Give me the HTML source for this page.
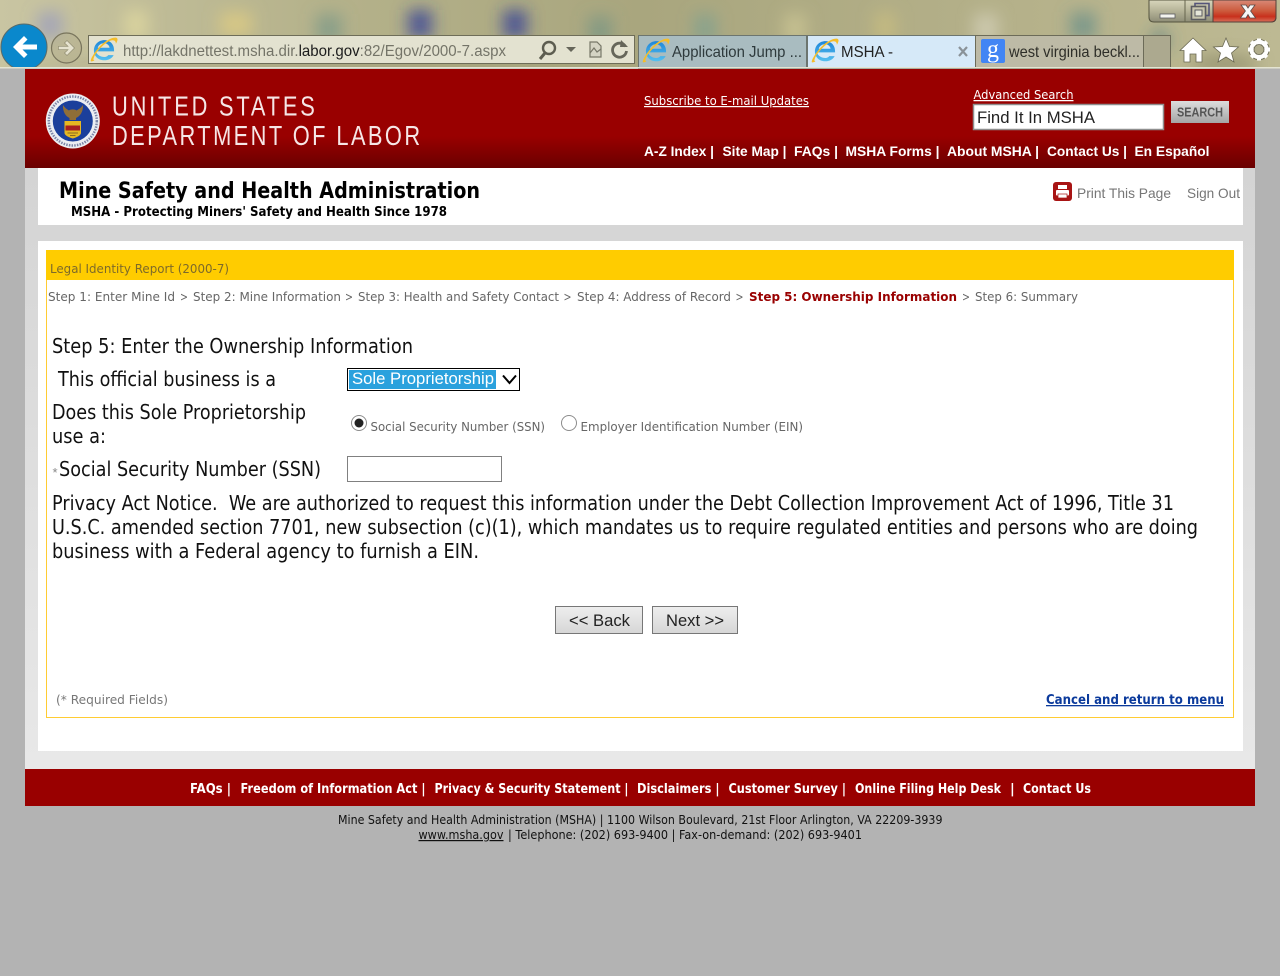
<!DOCTYPE html>
<html lang="en"><head><meta charset="utf-8"><title>MSHA - Legal Identity Report</title>
<style>
html,body{margin:0;padding:0;background:#b3b3b3;width:1280px;height:976px;overflow:hidden}
svg{display:block}
text{white-space:pre}
.t{font-family:"DejaVu Sans","Liberation Sans",sans-serif}
.a{font-family:"Liberation Sans",Arial,sans-serif}
.b{font-weight:bold}
.u{text-decoration:underline}
</style></head><body>
<svg xmlns="http://www.w3.org/2000/svg" width="1280" height="976" viewBox="0 0 1280 976">
<defs>
<linearGradient id="wall" x1="0" y1="0" x2="1" y2="0"><stop offset="0" stop-color="#c9c5a2"/><stop offset=".25" stop-color="#b5b28b"/><stop offset=".5" stop-color="#a9a67e"/><stop offset=".8" stop-color="#b5b18a"/><stop offset="1" stop-color="#bdb993"/></linearGradient>
<linearGradient id="red" x1="0" y1="0" x2="0" y2="1"><stop offset="0" stop-color="#990000"/><stop offset=".68" stop-color="#990000"/><stop offset="1" stop-color="#6a0000"/></linearGradient>
<linearGradient id="pg" x1="0" y1="0" x2="0" y2="1"><stop offset="0" stop-color="#d4d4d4"/><stop offset="1" stop-color="#e8e8e8"/></linearGradient>
<linearGradient id="srch" x1="0" y1="0" x2="0" y2="1"><stop offset="0" stop-color="#dcdcdc"/><stop offset="1" stop-color="#a5a5a5"/></linearGradient>
<linearGradient id="btn" x1="0" y1="0" x2="0" y2="1"><stop offset="0" stop-color="#eeeeee"/><stop offset="1" stop-color="#d6d6d6"/></linearGradient>
<linearGradient id="close" x1="0" y1="0" x2="0" y2="1"><stop offset="0" stop-color="#d98a78"/><stop offset=".5" stop-color="#cc5a3c"/><stop offset=".75" stop-color="#c8301c"/><stop offset="1" stop-color="#d8705a"/></linearGradient>
<linearGradient id="win" x1="0" y1="0" x2="0" y2="1"><stop offset="0" stop-color="#d8d6bc"/><stop offset=".5" stop-color="#b5b397"/><stop offset="1" stop-color="#8e8d76"/></linearGradient>
<linearGradient id="ieb" x1="0" y1="0" x2="0" y2="1"><stop offset="0" stop-color="#1f86d8"/><stop offset="1" stop-color="#55c0f0"/></linearGradient>
<filter id="bl" x="-80%" y="-80%" width="260%" height="260%"><feGaussianBlur stdDeviation="8"/></filter>
<clipPath id="top"><rect x="0" y="0" width="1280" height="68"/></clipPath>
<g id="ie">
<g transform="scale(1.12)">
<path d="M-7 1.200H9C9.400 -5.500 4.900 -8.800 0.400 -8.800C-5 -8.800 -9 -4.700 -9 0.400C-9 5.500 -5 9.200 0.400 9.200C4.200 9.200 7.200 7.500 8.600 4.600H3.800C2.900 5.800 1.900 6.200 0.400 6.200C-3 6.200 -6.800 4.200 -7 1.200ZM-5.600 -2C-5 -4.500 -2.500 -6 0 -6C2.500 -6 4.600 -4.500 5 -2Z" fill="url(#ieb)" fill-rule="evenodd"/>
<path d="M-10.500 10C-14 11.500 -10 3.500 -3.500 -3.500C2 -9 8.500 -11.800 11.300 -10.800C13 -10 11.500 -7 10.600 -5.400C10.800 -8.200 8.800 -9.400 5.800 -8.400C1 -6.800 -7.500 1.500 -9.300 7.500C-9.600 8.700 -9.400 9.200 -8.500 9.500C-9.200 9.800 -9.900 9.900 -10.500 10Z" fill="#f4bd2a"/>
</g>
</g>
</defs>

<!-- page background -->
<rect width="1280" height="976" fill="#b3b3b3"/>

<!-- browser chrome wallpaper -->
<g clip-path="url(#top)">
<rect width="1280" height="68" fill="url(#wall)"/>
<g filter="url(#bl)">
<rect x="38" y="12" width="24" height="26" fill="#8e92c8" opacity=".6"/>
<rect x="124" y="10" width="24" height="30" fill="#e2dca0" opacity=".7"/>
<rect x="220" y="12" width="32" height="24" fill="#e3cf80" opacity=".7"/>
<rect x="316" y="14" width="26" height="30" fill="#5f8e88" opacity=".5"/>
<rect x="408" y="10" width="24" height="28" fill="#2c3a98" opacity=".75"/>
<rect x="503" y="10" width="24" height="28" fill="#2c3a98" opacity=".75"/>
<rect x="588" y="16" width="24" height="30" fill="#5f8e88" opacity=".5"/>
<rect x="694" y="14" width="22" height="30" fill="#6d9e98" opacity=".55"/>
<rect x="784" y="14" width="22" height="30" fill="#d8d29a" opacity=".55"/>
<rect x="874" y="12" width="22" height="30" fill="#d6c67e" opacity=".5"/>
<rect x="974" y="14" width="24" height="30" fill="#d8d6c0" opacity=".65"/>
<rect x="1070" y="12" width="26" height="28" fill="#4f8488" opacity=".55"/>
<ellipse cx="1160" cy="40" rx="10" ry="12" fill="#3c6a7c" opacity=".45"/>
<ellipse cx="1225" cy="64" rx="34" ry="8" fill="#7f7d5c" opacity=".6"/>
<ellipse cx="300" cy="66" rx="300" ry="4" fill="#6e6c4e" opacity=".35"/>
</g>
</g>

<!-- window buttons -->
<path d="M1149 0H1276V17Q1276 22 1271 22H1154Q1149 22 1149 17Z" fill="url(#win)" stroke="#55543f"/>
<path d="M1213 0H1276V17Q1276 22 1271 22H1213Z" fill="url(#close)" stroke="#55403a"/>
<line x1="1185" y1="0" x2="1185" y2="22" stroke="#66654e"/>
<rect x="1160" y="14" width="15" height="4" fill="#f4f4ee" stroke="#5c5c60" stroke-width=".8"/>
<rect x="1195" y="3.500" width="14" height="12" fill="none" stroke="#55557a" stroke-width="1.600"/>
<rect x="1191.500" y="6.500" width="14" height="13" fill="#c8c6ae" stroke="#5c5c60" stroke-width="1.600"/>
<rect x="1195" y="10" width="7" height="6" fill="#e6e6d8" stroke="#5c5c60"/>
<path d="M1241 5H1246L1248 8L1250 5H1255L1250.600 11L1255.600 18H1250L1248 14.600L1246 18H1240.400L1245.400 11Z" fill="#f6f6f6" stroke="#5b4a48" stroke-width=".8"/>

<!-- back/forward -->
<g clip-path="url(#top)">
<circle cx="24" cy="47" r="23" fill="#0a88cc" stroke="#5a6a68" stroke-width="1"/>
<path d="M13 47L24 36L27.500 39.500L22.500 44.500H37V49.500H22.500L27.500 54.500L24 58Z" fill="#fff"/>
</g>
<circle cx="66.500" cy="48" r="15" fill="#b5b08f" fill-opacity=".6" stroke="#78745c" stroke-width="1.200"/>
<path d="M74.500 48L67 40.500L64.500 43L68 46.300H58.500V49.700H68L64.500 53L67 55.500Z" fill="#e6e3cf" stroke="#8b876c" stroke-width=".6"/>

<!-- address bar -->
<rect x="88.500" y="35.500" width="546" height="28" fill="#e3e2d0" stroke="#6e6d58"/>
<use href="#ie" x="104" y="50"/>
<text class="a" x="123" y="56" font-size="16" fill="#747468" textLength="383" lengthAdjust="spacingAndGlyphs">http://lakdnettest.msha.dir.<tspan fill="#1c1c1c">labor.gov</tspan>:82/Egov/2000-7.aspx</text>
<circle cx="549" cy="48" r="6" fill="none" stroke="#5d5d50" stroke-width="2.400"/>
<line x1="545" y1="53" x2="540" y2="59" stroke="#5d5d50" stroke-width="3"/>
<path d="M566 47H576L571 52Z" fill="#66665a"/>
<path d="M590 42H597L601 46V57H590Z" fill="#d5d4c4" stroke="#777768" stroke-width="1.200"/>
<path d="M590 53L594 48L597 52L601 49" fill="none" stroke="#777768" stroke-width="1.200"/>
<path d="M625.500 46.500A7 7 0 1 0 626.500 51" fill="none" stroke="#66665a" stroke-width="2.800"/>
<path d="M621 40L628 47L620 47Z" fill="#66665a"/>

<!-- tabs -->
<rect x="638.500" y="35.500" width="168" height="33" fill="#a9bcc0" stroke="#6c756f"/>
<use href="#ie" x="656" y="51"/>
<text class="a" x="672" y="57" font-size="16" fill="#2e3a3c" textLength="130" lengthAdjust="spacingAndGlyphs">Application Jump ...</text>
<rect x="807.500" y="35.500" width="168" height="33" fill="#d6e9f8" stroke="#6c756f"/>
<use href="#ie" x="825" y="51"/>
<text class="a" x="841" y="57" font-size="16" fill="#222" textLength="52" lengthAdjust="spacingAndGlyphs">MSHA -</text>
<path d="M959 47L967 56M967 47L959 56" stroke="#8a9298" stroke-width="2.200"/>
<rect x="975.500" y="35.500" width="168" height="33" fill="#bdbaa6" stroke="#6c6b58"/>
<rect x="1143.500" y="35.500" width="27" height="33" fill="#aca98f" stroke="#6c6b58"/>
<rect x="981" y="39" width="24" height="24" rx="2" fill="#4285f4"/>
<text x="987" y="57" font-size="25" fill="#fff" style="font-family:'Liberation Serif',serif" textLength="12" lengthAdjust="spacingAndGlyphs">g</text>
<text class="a" x="1009" y="57" font-size="16" fill="#2e2e28" textLength="131" lengthAdjust="spacingAndGlyphs">west virginia beckl...</text>

<!-- home / star / gear -->
<path d="M1193 38L1206 50.500H1202V62H1196V54H1190V62H1184V50.500H1180Z" fill="#fff" stroke="#6a6852" stroke-width=".8"/>
<path d="M1226 38L1229.500 46.500L1238.500 47L1231.500 53L1234 62L1226 57L1218 62L1220.500 53L1213.500 47L1222.500 46.500Z" fill="#fff" stroke="#6a6852" stroke-width=".8"/>
<circle cx="1259" cy="49.500" r="7.800" fill="none" stroke="#6a6852" stroke-width="5.500"/>
<circle cx="1259" cy="49.500" r="7.800" fill="none" stroke="#fff" stroke-width="3.800"/>
<g stroke="#fff" stroke-width="4"><line x1="1259" y1="38.500" x2="1259" y2="60.500"/><line x1="1248" y1="49.500" x2="1270" y2="49.500"/><line x1="1251.200" y1="41.700" x2="1266.800" y2="57.300"/><line x1="1266.800" y1="41.700" x2="1251.200" y2="57.300"/></g>
<circle cx="1259" cy="49.500" r="5" fill="#b0ad8c" stroke="#6a6852" stroke-width=".8"/>
<rect x="0" y="67" width="1280" height="1.500" fill="#e4e4d2"/>

<!-- page wrapper -->
<rect x="25" y="168" width="1230" height="601" fill="url(#pg)"/>

<!-- red header -->
<rect x="25" y="69" width="1230" height="99" fill="url(#red)"/>
<!-- seal -->
<ellipse cx="72.800" cy="121" rx="27" ry="27.500" fill="#eceef2"/>
<ellipse cx="72.800" cy="121" rx="24" ry="24.500" fill="none" stroke="#7c86a8" stroke-width="2.500" stroke-dasharray="1.500 1.200"/>
<ellipse cx="72.800" cy="121" rx="20" ry="20.500" fill="#1b3f9b"/>
<path d="M63 105C65 108 66.500 109 69 110.500C70.500 109 75 109 76.500 110.500C79 109 81 108 83 105C83.500 112 79.500 116.500 76 118V120H69.500V118C66 116.500 62.500 112 63 105Z" fill="#8f6e38"/>
<path d="M64.500 121H81V133C81 135.500 76 137.500 72.800 138.500C69.500 137.500 64.500 135.500 64.500 133Z" fill="#e6b822"/>
<rect x="65.500" y="125.500" width="14.500" height="5" fill="#a82020"/>
<path d="M67.500 133H78M70 135.500H75.500" stroke="#8a6a20" stroke-width="1"/>
<text class="a" transform="translate(112 115.500) scale(.78 1)" x="0" y="0" font-size="28" fill="#f6e6e6" textLength="260" lengthAdjust="spacing">UNITED STATES</text>
<text class="a" transform="translate(112 145) scale(.78 1)" x="0" y="0" font-size="28" fill="#f6e6e6" textLength="395" lengthAdjust="spacing">DEPARTMENT OF LABOR</text>

<text class="t u" x="644" y="105" font-size="12" fill="#fff" textLength="165" lengthAdjust="spacingAndGlyphs">Subscribe to E-mail Updates</text>
<text class="t u" x="973.500" y="99" font-size="12.500" fill="#fff" textLength="100" lengthAdjust="spacingAndGlyphs">Advanced Search</text>
<rect x="973.500" y="104.500" width="190" height="25" fill="#fff" stroke="#8f8f8f" stroke-width="1.500"/>
<text class="a" x="977" y="123" font-size="17" fill="#222" textLength="118" lengthAdjust="spacingAndGlyphs">Find It In MSHA</text>
<rect x="1171" y="101" width="58" height="22" fill="url(#srch)"/>
<text class="a b" x="1177" y="116.500" font-size="12.500" fill="#555" textLength="46" lengthAdjust="spacingAndGlyphs">SEARCH</text>

<g class="a b" font-size="14" fill="#fff">
<text x="644" y="156" textLength="70" lengthAdjust="spacingAndGlyphs">A-Z Index |</text>
<text x="722.500" y="156" textLength="64" lengthAdjust="spacingAndGlyphs">Site Map |</text>
<text x="794" y="156" textLength="44" lengthAdjust="spacingAndGlyphs">FAQs |</text>
<text x="845.500" y="156" textLength="94" lengthAdjust="spacingAndGlyphs">MSHA Forms |</text>
<text x="947" y="156" textLength="92" lengthAdjust="spacingAndGlyphs">About MSHA |</text>
<text x="1047" y="156" textLength="80" lengthAdjust="spacingAndGlyphs">Contact Us |</text>
<text x="1134.500" y="156" textLength="75" lengthAdjust="spacingAndGlyphs">En Español</text>
</g>

<!-- title panel -->
<rect x="38" y="168" width="1205" height="57" fill="#fff"/>
<text class="t b" x="59" y="198" font-size="22" fill="#000" textLength="421" lengthAdjust="spacingAndGlyphs">Mine Safety and Health Administration</text>
<text class="t b" x="71" y="216" font-size="13" fill="#000" textLength="376" lengthAdjust="spacingAndGlyphs">MSHA - Protecting Miners' Safety and Health Since 1978</text>
<rect x="1053" y="182" width="19" height="19" rx="3" fill="#a81414"/>
<path d="M1058 185H1067V189H1058Z" fill="#fff"/>
<rect x="1056" y="190" width="13" height="5.500" rx="1" fill="#fff"/>
<rect x="1058" y="194" width="9" height="4" fill="#fff" stroke="#a81414" stroke-width=".7"/>
<text class="a" x="1077" y="198" font-size="14" fill="#767676" textLength="94" lengthAdjust="spacingAndGlyphs">Print This Page</text>
<text class="a" x="1187" y="198" font-size="14" fill="#767676" textLength="53" lengthAdjust="spacingAndGlyphs">Sign Out</text>

<!-- content panel -->
<rect x="38" y="241" width="1205" height="510" fill="#fff"/>
<rect x="46.500" y="250.500" width="1187" height="467" fill="#fff" stroke="#ffcc33"/>
<rect x="46" y="250" width="1188" height="30" fill="#ffcc00"/>
<text class="t" x="50" y="273" font-size="12" fill="#7d6a2a" textLength="179" lengthAdjust="spacingAndGlyphs">Legal Identity Report (2000-7)</text>

<g class="t" font-size="12" fill="#666">
<text x="48" y="301" textLength="127" lengthAdjust="spacingAndGlyphs">Step 1: Enter Mine Id</text>
<text x="180" y="301" textLength="8" lengthAdjust="spacingAndGlyphs">&gt;</text>
<text x="193" y="301" textLength="148" lengthAdjust="spacingAndGlyphs">Step 2: Mine Information</text>
<text x="345" y="301" textLength="8" lengthAdjust="spacingAndGlyphs">&gt;</text>
<text x="358" y="301" textLength="201" lengthAdjust="spacingAndGlyphs">Step 3: Health and Safety Contact</text>
<text x="563.500" y="301" textLength="8" lengthAdjust="spacingAndGlyphs">&gt;</text>
<text x="577" y="301" textLength="154" lengthAdjust="spacingAndGlyphs">Step 4: Address of Record</text>
<text x="735.500" y="301" textLength="8" lengthAdjust="spacingAndGlyphs">&gt;</text>
<text class="b" x="749" y="301" fill="#990000" textLength="208" lengthAdjust="spacingAndGlyphs">Step 5: Ownership Information</text>
<text x="962" y="301" textLength="8" lengthAdjust="spacingAndGlyphs">&gt;</text>
<text x="975" y="301" textLength="103" lengthAdjust="spacingAndGlyphs">Step 6: Summary</text>
</g>

<g class="t" font-size="20" fill="#111">
<text x="52" y="353" textLength="361" lengthAdjust="spacingAndGlyphs">Step 5: Enter the Ownership Information</text>
<text x="58" y="386" textLength="218" lengthAdjust="spacingAndGlyphs">This official business is a</text>
<text x="52" y="419" textLength="254" lengthAdjust="spacingAndGlyphs">Does this Sole Proprietorship</text>
<text x="52" y="443" textLength="54" lengthAdjust="spacingAndGlyphs">use a:</text>
<text x="59" y="476" textLength="262" lengthAdjust="spacingAndGlyphs">Social Security Number (SSN)</text>
<text x="52" y="510" textLength="1122" lengthAdjust="spacingAndGlyphs">Privacy Act Notice.  We are authorized to request this information under the Debt Collection Improvement Act of 1996, Title 31</text>
<text x="52" y="534" textLength="1146" lengthAdjust="spacingAndGlyphs">U.S.C. amended section 7701, new subsection (c)(1), which mandates us to require regulated entities and persons who are doing</text>
<text x="52" y="558" textLength="427" lengthAdjust="spacingAndGlyphs">business with a Federal agency to furnish a EIN.</text>
</g>
<text class="a" x="52.500" y="477" font-size="13" fill="#888">*</text>

<!-- select -->
<rect x="347.500" y="368.500" width="172" height="22" fill="#fff" stroke="#000"/>
<rect x="349" y="370" width="147" height="19" fill="#2aa1dd"/>
<text class="a" x="352" y="384" font-size="17" fill="#fff" textLength="142" lengthAdjust="spacingAndGlyphs">Sole Proprietorship</text>
<path d="M503 375.500L509.500 383L516 375.500" fill="none" stroke="#000" stroke-width="2"/>

<!-- radios -->
<circle cx="359" cy="423" r="7.500" fill="#fff" stroke="#8c8c8c"/>
<circle cx="359" cy="423" r="4.500" fill="#222"/>
<circle cx="569" cy="423" r="7.500" fill="#fff" stroke="#8c8c8c"/>
<text class="t" x="370.500" y="431" font-size="12" fill="#666" textLength="174.500" lengthAdjust="spacingAndGlyphs">Social Security Number (SSN)</text>
<text class="t" x="580.500" y="431" font-size="12" fill="#666" textLength="222.500" lengthAdjust="spacingAndGlyphs">Employer Identification Number (EIN)</text>

<!-- ssn input -->
<rect x="347.500" y="456.500" width="154" height="25" fill="#fff" stroke="#808080"/>

<!-- buttons -->
<rect x="555.500" y="606.500" width="87" height="27" fill="url(#btn)" stroke="#777"/>
<text class="a" x="569" y="626" font-size="17" fill="#222" textLength="61" lengthAdjust="spacingAndGlyphs">&lt;&lt; Back</text>
<rect x="652.500" y="606.500" width="85" height="27" fill="url(#btn)" stroke="#777"/>
<text class="a" x="666" y="626" font-size="17" fill="#222" textLength="58" lengthAdjust="spacingAndGlyphs">Next &gt;&gt;</text>

<text class="t" x="56" y="704" font-size="12" fill="#777" textLength="112" lengthAdjust="spacingAndGlyphs">(* Required Fields)</text>
<text class="t b u" x="1046" y="704" font-size="13" fill="#0b3a9c" textLength="178" lengthAdjust="spacingAndGlyphs">Cancel and return to menu</text>

<!-- footer -->
<rect x="25" y="769" width="1230" height="37" fill="#990000"/>
<g class="t b" font-size="13" fill="#fff">
<text x="190" y="793" textLength="41" lengthAdjust="spacingAndGlyphs">FAQs |</text>
<text x="240.500" y="793" textLength="185" lengthAdjust="spacingAndGlyphs">Freedom of Information Act |</text>
<text x="434.500" y="793" textLength="194" lengthAdjust="spacingAndGlyphs">Privacy &amp; Security Statement |</text>
<text x="637" y="793" textLength="82.500" lengthAdjust="spacingAndGlyphs">Disclaimers |</text>
<text x="728.500" y="793" textLength="117.500" lengthAdjust="spacingAndGlyphs">Customer Survey |</text>
<text x="855" y="793" textLength="146" lengthAdjust="spacingAndGlyphs">Online Filing Help Desk</text>
<text x="1010" y="793">|</text>
<text x="1023" y="793" textLength="68" lengthAdjust="spacingAndGlyphs">Contact Us</text>
</g>
<g class="t" font-size="12" fill="#111">
<text x="338" y="824" textLength="604.500" lengthAdjust="spacingAndGlyphs">Mine Safety and Health Administration (MSHA) | 1100 Wilson Boulevard, 21st Floor Arlington, VA 22209-3939</text>
<text class="u" x="418.500" y="839" textLength="85" lengthAdjust="spacingAndGlyphs">www.msha.gov</text>
<text x="508" y="839" textLength="354" lengthAdjust="spacingAndGlyphs">| Telephone: (202) 693-9400 | Fax-on-demand: (202) 693-9401</text>
</g>
</svg>
</body></html>
